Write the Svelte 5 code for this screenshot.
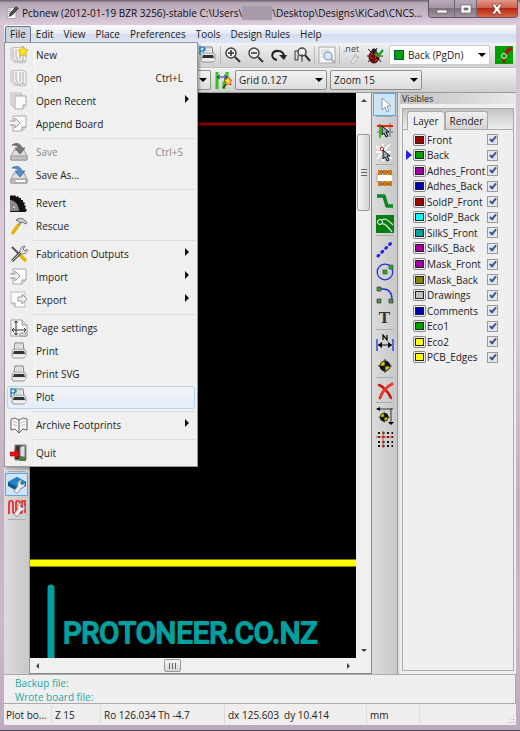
<script>
  const menus = ['File', 'Edit', 'View', 'Place', 'Preferences', 'Tools', 'Design Rules', 'Help'];

  const fileMenu = [
    { label: 'New', icon: 'new' },
    { label: 'Open', icon: 'open', key: 'Ctrl+L' },
    { label: 'Open Recent', icon: 'recent', sub: true },
    { label: 'Append Board', icon: 'import' },
    null,
    { label: 'Save', icon: 'save', key: 'Ctrl+S', disabled: true },
    { label: 'Save As...', icon: 'saveAs' },
    null,
    { label: 'Revert', icon: 'saw' },
    { label: 'Rescue', icon: 'hammer' },
    null,
    { label: 'Fabrication Outputs', icon: 'tools', sub: true },
    { label: 'Import', icon: 'import', sub: true },
    { label: 'Export', icon: 'export', sub: true },
    null,
    { label: 'Page settings', icon: 'page' },
    { label: 'Print', icon: 'print' },
    { label: 'Print SVG', icon: 'print' },
    { label: 'Plot', icon: 'plot', active: true },
    null,
    { label: 'Archive Footprints', icon: 'book', sub: true },
    null,
    { label: 'Quit', icon: 'quit' },
  ];

  const layers = [
    ['Front', '#a00000'],
    ['Back', '#00a000'],
    ['Adhes_Front', '#a000a0'],
    ['Adhes_Back', '#0000b8'],
    ['SoldP_Front', '#a00000'],
    ['SoldP_Back', '#00ffff'],
    ['SilkS_Front', '#00a0a0'],
    ['SilkS_Back', '#a000a0'],
    ['Mask_Front', '#a000a0'],
    ['Mask_Back', '#848400'],
    ['Drawings', '#c0c0c0'],
    ['Comments', '#0000b8'],
    ['Eco1', '#00a000'],
    ['Eco2', '#ffff00'],
    ['PCB_Edges', '#ffff00'],
  ];

  const rightTools = [
    'cursor', null, 'ratsnest', 'highlight', null, 'module', 'track', 'zone', null,
    'line', 'circle', 'arc', 'text', null, 'dimension', 'target', null, 'delete', null,
    'offset', 'grid',
  ];

  const sheet = '<path d="M3 1h13v11l-4 4H3z" fill="#fbfbfb" stroke="#aaa"/><path d="M12 16v-4h4" fill="#ddd" stroke="#999"/>';
  const board = '<path d="M1 2l11-1 4 2v13l-3 1-9-1-3-3z" fill="#f4f4f4" stroke="#bbb"/><path d="M3 3v9l3 3M6 3v8l2 3M10 3v10M13 3v12M5 15h10" fill="none" stroke="#aaa"/>';
  const printer = '<path d="M5 1h8l1 7H4z" fill="#fff" stroke="#777"/><path d="M2 9l2-2h10l2 2v5l-2 2H3l-1-2z" fill="#e2e2e2" stroke="#999"/><path d="M4 9h10l1 3H3z" fill="#333"/><path d="M3 14h13" stroke="#fff"/><path d="M6 3h6M6 5h6" stroke="#bbb"/>';
  const drive = '<path d="M4 7h10l3 6v4H1v-4z" fill="#ddd" stroke="#999"/><path d="M1 13h16v4H1z" fill="#c4c4c4" stroke="#999"/>';
  const glass = '<circle cx="7" cy="7" r="5" fill="#eee" stroke="#444" stroke-width="1.500"/><path d="M11 11l5 5" stroke="#333" stroke-width="2"/>';
  const wrench = '<path d="M8 17l-2-2 4-5c-1-4 1-6 4-6l-2 3 2 2 3-2c0 4-2 5-4 5l-3 5z" fill="#eee" stroke="#888" stroke-width=".8"/>';
  const target = '<circle cx="9" cy="9" r="5" fill="#d8c800" stroke="#111"/><path d="M9 9V4a5 5 0 0 1 5 5zM9 9v5a5 5 0 0 1-5-5z" fill="#111"/><path d="M9 2v14M2 9h14" stroke="#111" stroke-width=".8"/>';

  const icons = {
    app: '<path d="M3 2h11v14H3z" fill="#fff" stroke="#999"/><path d="M4 4h4M4 7h4M4 10h3M4 13h3" stroke="#777"/><path d="M6 13l1-4 7-8 3 2-7 8z" fill="#555" stroke="#222"/>',
    new: board + '<path d="M13 0l1.500 3.500 3.500.5-2.500 2.500.5 4-3-2-3.500 2 1-4L8 4l3.500-.5z" fill="#ffe818" stroke="#c9a800" stroke-width=".7"/>',
    open: board,
    recent: '<path d="M1 1h10v12H1z" fill="#eee" stroke="#bbb"/><path d="M3 3h10v12H3z" fill="#f4f4f4" stroke="#bbb"/><path d="M5 4h11v9l-3 4H5z" fill="#fbfbfb" stroke="#aaa"/><path d="M13 17v-4h3" fill="#ddd" stroke="#aaa"/>',
    import: sheet + '<path d="M0 6h5V3l5 5-5 5v-3H0" fill="#f0f0f0" stroke="#999"/>',
    export: '<path d="M1 1h14v15H5l-4-4z" fill="#fbfbfb" stroke="#bbb"/><path d="M1 12h4v4" fill="#ddd" stroke="#aaa"/><path d="M8 6h4V3l5 5-5 5v-3H8z" fill="#f0f0f0" stroke="#999"/>',
    save: drive + '<path d="M2 2c5-3 9-1 10 3h3l-5 6-5-6h3c0-2-2-3-6-3z" fill="#777" stroke="#555" stroke-width=".7"/>',
    saveAs: drive + '<path d="M2 2c5-3 9-1 10 3h3l-5 6-5-6h3c0-2-2-3-6-3z" fill="#5b8fc4" stroke="#31619a" stroke-width=".7"/><path d="M6 14h9v2H6z" fill="#fff"/>',
    saw: '<path d="M0 2l2-1 1 1 2-1 1 2 2-1 1 2 2 0 0 2 2 0 0 2 2 1-1 2 2 1-1 2 2 2-2 3H0z" fill="#111"/><path d="M0 6c5 0 9 5 9 11H0z" fill="#888"/><circle cx="4" cy="13" r="1" fill="#ddd"/>',
    hammer: '<path d="M2 17L9 7" stroke="#e6b400" stroke-width="3.500"/><path d="M9 8l3-4" stroke="#999" stroke-width="2"/><path d="M6 3c4-3 8-2 11 3l-2 1c-2-2-3-2-5-1L8 4z" fill="#ccc" stroke="#555" stroke-width=".8"/>',
    tools: '<path d="M2 2l9 9" stroke="#555" stroke-width="2"/><path d="M10 10l6 6" stroke="#e6b400" stroke-width="3.500"/><path d="M2 16l9-9" stroke="#444" stroke-width="3"/><path d="M2 16l9-9" stroke="#ddd"/><path d="M10 7c0-4 2-6 5-6l-2 3 2 2 2-2c1 3-2 5-5 5" fill="#ddd" stroke="#777"/>',
    page: '<path d="M1 1h11l5 5v11H1z" fill="#fff" stroke="#999"/><path d="M12 1v5h5M10 14h7v3h-7z" fill="#ddd" stroke="#999"/><path d="M6 2v14M2 11h14M4 4l2-2 2 2M4 14l2 2 2-2M4 9l-2 2 2 2M14 9l2 2-2 2" fill="none" stroke="#333"/>',
    print: printer,
    plot: printer + '<path d="M1 9V1h2c4 0 4 4 0 4H1" fill="none" stroke="#2489c8" stroke-width="1.500"/>',
    book: '<path d="M9 4L5 2 1 3v11l4-1 4 4 4-4 4 1V3l-4-1z" fill="#f6f6f6" stroke="#666"/><path d="M9 4v13" stroke="#555"/><path d="M3 5l4 2M3 8l4 2M15 5l-4 2M15 8l-4 2" stroke="#bbb"/>',
    quit: '<path d="M5 1h11v15H5z" fill="#343434" stroke="#888"/><path d="M10 3l5-2v12l-5 4z" fill="#ddd" stroke="#777"/><path d="M10 12l6 1v4h-6z" fill="#55793e"/><path d="M0 8h5V5l5 5-5 5v-3H0z" fill="#e81010" stroke="#b00" stroke-width=".6"/>',
    zoomIn: glass + '<path d="M4 7h6M7 4v6" stroke="#333" stroke-width="1.500"/>',
    zoomOut: glass + '<path d="M4 7h6" stroke="#333" stroke-width="1.500"/>',
    redraw: '<path d="M7 14c-8-2-5-10 2-9 3 0 4 2 5 4" fill="none" stroke="#222" stroke-width="2"/><path d="M9 9h8l-3 5z" fill="#222"/>',
    zoomFit: '<circle cx="9" cy="6" r="4" fill="#eee" stroke="#444" stroke-width="1.500"/><path d="M12 9l5 6" stroke="#333" stroke-width="2"/><path d="M5 5H2v9h3V9M9 8v8" fill="none" stroke="#333"/>',
    find: '<path d="M1 1h16v16H1z" fill="#f8f8f8" stroke="#aaa"/><path d="M3 4h9M3 6h7M3 8h5M3 11h3" stroke="#ccc"/><circle cx="10" cy="10" r="4" fill="#dce9f5" stroke="#8eafd0" stroke-width="1.500"/><path d="M13 13l4 4" stroke="#aaa" stroke-width="2"/>',
    bug: '<path d="M2 3l4 4M11 2L9 6M1 10h4M2 16l4-4M14 10h3M15 16l-3-4" stroke="#222"/><ellipse cx="8" cy="11" rx="5" ry="6" fill="#b51c10" stroke="#300"/><circle cx="8" cy="5" r="2.500" fill="#222"/><path d="M8 6v11" stroke="#300"/><circle cx="6" cy="10" r="1"/><circle cx="11" cy="12" r="1"/><circle cx="6" cy="14" r="1"/><path d="M9 7l3 3 5-6" fill="none" stroke="#1ca51c" stroke-width="2.500"/>',
    router: '<path d="M0 0h18v18H0z" fill="#00a000"/><path d="M17 2l-4 2-3 5" fill="none" stroke="#b01010" stroke-width="3.500"/><path d="M9 9v8" stroke="#b01010" stroke-width="3"/><circle cx="9" cy="10" r="2.500" fill="#00a000" stroke="#eee"/>',
    autoTrack: '<path d="M3 1v17M13 1v7l-3 4v6" fill="none" stroke="#32c41c" stroke-width="3"/><path d="M3 6h10M6 4L3 6l3 2M10 4l3 2-3 2" fill="none" stroke="#173579"/><path d="M9 17l5-6" stroke="#333" stroke-width="1.500"/><path d="M15 6l1 3h2l-2 2 1 3-3-1-2 1v-3l-2-2 3-1z" fill="#ffd840" stroke="#d83a18" stroke-width=".8"/>',
    cursor: '<path d="M6 2v12l3-3 2 5 2-1-2-5h4z" fill="#fff" stroke="#8d9aab"/>',
    ratsnest: '<path d="M14 2v14M1 11h16" stroke="#999" stroke-width="2"/><path d="M4 3v14" stroke="#34bf17" stroke-width="2"/><path d="M1 5h16" stroke="#f02010" stroke-width="2"/><path d="M6 5v9l2-2 2 4 2-1-2-4h3z" fill="#9ab" stroke="#111"/>',
    highlight: '<path d="M0 2l16 13M1 15L14 0M7 0v17M0 8h15" stroke="#fff" stroke-width="1.500"/><circle cx="6" cy="5" r="1.700" fill="#fff" stroke="#e02020"/><path d="M7 6v9l2-2 2 4 2-1-2-4h3z" fill="#9ab" stroke="#112"/>',
    module: '<path d="M1 5h16v8H1z" fill="#fff" stroke="#aaa"/><path d="M2 3h14M2 15h14" stroke="#733c0c" stroke-width="2"/><path d="M4 1v5M9 1v5M14 1v5M4 12v5M9 12v5M14 12v5" stroke="#c87820" stroke-width="4"/>',
    track: '<path d="M1 4h7l3 10h6" fill="none" stroke="#078820" stroke-width="3.500" stroke-linejoin="round"/>',
    zone: '<path d="M0 0h18v18H0z" fill="#087d13"/><circle cx="4" cy="7" r="2.500" fill="none" stroke="#fff"/><path d="M6 5c3-2 5-1 11 5M6 9c3-1 5 2 10 8" fill="none" stroke="#d6e9d6" stroke-width="1.300"/>',
    line: '<path d="M2 16L16 2" stroke="#1524e5" stroke-width="3" stroke-linecap="round" stroke-dasharray="1 4.500"/>',
    circle: '<circle cx="9" cy="9" r="7.800" fill="none" stroke="#2635df" stroke-width="1.300"/><path d="M7 7h4v4H7zM13 2h4v4h-4z" fill="#3a9d3a" stroke="#175c17" stroke-width=".6"/>',
    arc: '<path d="M3 3h4c6 0 9 4 9 11" fill="none" stroke="#2635df" stroke-width="1.500"/><path d="M1 1h4v4H1zM1 13h4v4H1zM13 13h4v4h-4z" fill="#3a9d3a" stroke="#444" stroke-width=".8"/>',
    dimension: '<path d="M1 5v12M17 5v12" stroke="#1c35d5" stroke-width="1.300"/><path d="M2 11h14" stroke="#111"/><path d="M2 11l4-3v6zM16 11l-4-3v6z"/><path d="M7 6V1l4 5V1" fill="none" stroke="#111" stroke-width="1.300"/>',
    target,
    delete: '<path d="M3 3c3 1 9 6 12 13" fill="none" stroke="#c81a10" stroke-width="2.500" stroke-linecap="round"/><path d="M16 2C10 5 6 10 4 16" fill="none" stroke="#e23a2c" stroke-width="3" stroke-linecap="round"/>',
    offset: '<g transform="translate(1 3) scale(.8)">' + target + '</g><path d="M1 2h16M15 1v15" stroke="#333"/><path d="M0 2l4-2v4zM15 18l-3-3h6z"/>',
    grid: '<path d="M2 3h15M2 7h15M2 12h15M2 16h15" stroke="#111" stroke-width="2" stroke-dasharray="2 2.500"/><path d="M7 1v17M0 7h18" stroke="#e03a2a"/>',
    blueBoard: '<path d="M0 6l9-5 9 5v4l-9 5-9-5z" fill="#145989"/><path d="M0 6l9-5 9 5-9 5z" fill="#1d86c4"/>' + wrench,
    redTrack: '<path d="M1 15V4c0-3 4-3 4 0v8c0 3 3 3 3 0V4c0-3 4-3 4 0v8c0 3 2 3 2 0V2h3v12" fill="none" stroke="#e22" stroke-width="1.700"/>' + wrench,
    net: wrench,
  };
</script>

{#snippet icon(name)}
  <svg class="icon" viewBox="0 0 18 18" aria-hidden="true">{@html icons[name]}</svg>
{/snippet}

<div class="window">
  <header class="titlebar">
    {@render icon('app')}
    <h1>Pcbnew (2012-01-19 BZR 3256)-stable C:\Users\<span class="redacted"></span>\Desktop\Designs\KiCad\CNCS...</h1>
    <div class="controls">
      <button aria-label="Minimize"><svg viewBox="0 0 14 12"><path d="M2 7h10v3H2z" fill="#fff" stroke="#666" stroke-width=".7" /></svg></button>
      <button class="max" aria-label="Maximize"><svg viewBox="0 0 14 12"><path d="M2 2h10v8H2zM5 5v2h4V5z" fill="#fff" fill-rule="evenodd" stroke="#666" stroke-width=".7" /></svg></button>
      <button class="close" aria-label="Close"><svg viewBox="0 0 14 12"><path d="M2 1h3l2 3 2-3h3L9 6l3 5H9L7 8l-2 3H2l3-5z" fill="#fff" stroke="#644" stroke-width=".7" /></svg></button>
    </div>
  </header>

  <div class="frame">
    <nav class="menubar">
      {#each menus as menu, i}
        <button class:open={i === 0}>{menu}</button>
      {/each}

      <div class="dropdown" role="menu">
        {#each fileMenu as item}
          {#if item}
            <button class="item" class:active={item.active} role="menuitem" disabled={item.disabled}>
              {@render icon(item.icon)}
              <span>{item.label}</span>
              {#if item.key}<kbd>{item.key}</kbd>{/if}
              {#if item.sub}<i class="arrow"></i>{/if}
            </button>
          {:else}
            <hr />
          {/if}
        {/each}
      </div>
    </nav>

    <div class="toolbar main">
      <button aria-label="Plot">{@render icon('plot')}</button>
      <i class="sep"></i>
      <button aria-label="Zoom in">{@render icon('zoomIn')}</button>
      <button aria-label="Zoom out">{@render icon('zoomOut')}</button>
      <button aria-label="Redraw">{@render icon('redraw')}</button>
      <button aria-label="Zoom to fit">{@render icon('zoomFit')}</button>
      <i class="sep"></i>
      <button aria-label="Find">{@render icon('find')}</button>
      <i class="sep"></i>
      <button class="net" aria-label="Netlist"><small>.net</small>{@render icon('net')}</button>
      <button aria-label="Design rules check">{@render icon('bug')}</button>
      <label class="combo layer">
        <i class="chip"></i>
        <select aria-label="Active layer"><option>Back (PgDn)</option></select>
      </label>
      <button aria-label="Router mode">{@render icon('router')}</button>
    </div>

    <div class="toolbar aux">
      <label class="combo track"><select aria-label="Track width"><option></option></select></label>
      <button aria-label="Auto track width">{@render icon('autoTrack')}</button>
      <label class="combo"><select aria-label="Grid"><option>Grid 0.127</option></select></label>
      <label class="combo"><select aria-label="Zoom"><option>Zoom 15</option></select></label>
    </div>

    <main>
      <div class="side left">
        <hr />
        <button class="on" aria-label="Layers manager">{@render icon('blueBoard')}</button>
        <button aria-label="Microwave tools">{@render icon('redTrack')}</button>
        <hr />
      </div>

      <div class="view">
        <svg class="canvas">
          <line x1="0" y1="31" x2="100%" y2="31" stroke="#840000" stroke-width="3" />
          <line x1="0" y1="470" x2="100%" y2="470" stroke="#ff0" stroke-width="7" />
          <line x1="21" y1="495" x2="21" y2="600" stroke="#00a0a0" stroke-width="7" stroke-linecap="round" />
          <text x="33" y="550">PROTONEER.CO.NZ</text>
        </svg>
        <div class="scroll vertical"><i class="up"></i><b></b><i class="down"></i></div>
        <div class="scroll horizontal"><i class="back"></i><b></b><i class="next"></i></div>
      </div>

      <div class="side right">
        {#each rightTools as tool}
          {#if tool === 'text'}
            <button class="letter">T</button>
          {:else if tool}
            <button class:on={tool === 'cursor'} aria-label={tool}>{@render icon(tool)}</button>
          {:else}
            <hr />
          {/if}
        {/each}
      </div>

      <aside>
        <h2>Visibles</h2>
        <div class="panel">
          <div class="tabs">
            <button class="current">Layer</button>
            <button>Render</button>
          </div>
          <ul>
            {#each layers as [name, color], i}
              <li>
                <i class="mark" class:shown={i === 1}></i>
                <button class="swatch" aria-label="{name} colour"><span style="background: {color}"></span></button>
                <label for="layer-{i}">{name}</label>
                <input id="layer-{i}" type="checkbox" checked />
              </li>
            {/each}
          </ul>
        </div>
      </aside>
    </main>

    <div class="messages">
      <p>Backup file:</p>
      <p>Wrote board file:</p>
    </div>

    <footer>
      <span class="msg">Plot bo...</span>
      <span class="zoom">Z 15</span>
      <span class="polar">Ro 126.034 Th -4.7</span>
      <span class="delta">dx 125.603&nbsp; dy 10.414</span>
      <span class="unit">mm</span>
      <span class="grip"></span>
    </footer>
  </div>
</div>

<style>
  :global(body) {
    margin: 0;
  }

  .window {
    display: flex;
    flex-direction: column;
    box-sizing: border-box;
    min-height: 100vh;
    padding: 0 4px 5px;

    font-family: 'Open Sans', 'Noto Sans', sans-serif;
    font-size: 10px;
    line-height: 14px;
    color: #222;

    background: linear-gradient(#a99aa9, #d5c3d4 26px, #dccbdd 300px, #c3afc4 500px, #cdb8cd 620px, #bda9bf);
    border-bottom: 1px solid #554a55;
  }

  button,
  select,
  kbd {
    padding: 0;
    font: inherit;
    color: inherit;
    background: none;
    border: 0;
  }

  h1,
  h2,
  p,
  ul,
  hr {
    margin: 0;
    padding: 0;
    border: 0;
  }

  .icon {
    display: block;
    flex: none;
    width: 18px;
    height: 18px;
  }

  .titlebar {
    display: flex;
    align-items: center;
    height: 25px;
    margin: 0 -4px;
    padding-left: 5px;
    background: linear-gradient(#6d606d, #b6a7b6 3px, #cbbacb 16px, #dccddd);
  }

  .titlebar .icon {
    width: 14px;
    height: 14px;
  }

  h1 {
    flex: 1;
    padding-left: 3px;
    font-size: 10px;
    font-weight: 400;
    white-space: nowrap;
    color: #111;
  }

  .redacted {
    display: inline-block;
    width: 30px;
    height: 14px;
    vertical-align: top;
    background: #a89ba8;
  }

  .controls {
    display: flex;
    align-self: flex-start;
    height: 17px;
    margin-right: 2px;
    border: 1px solid #625662;
    border-top: 0;
    border-radius: 0 0 4px 4px;
    overflow: hidden;
  }

  .controls button {
    display: grid;
    place-items: center;
    width: 26px;
    border-right: 1px solid #746674;
    background: linear-gradient(#b9aab9, #a293a2 50%, #7f707f 50%, #a494a4);
  }

  .controls .max {
    width: 22px;
  }

  .controls .close {
    width: 40px;
    border: 0;
    background: linear-gradient(#e19787, #cf5b47 50%, #b8280f 50%, #d6644a);
  }

  .controls svg {
    width: 14px;
    height: 12px;
  }

  .frame {
    display: flex;
    flex: 1;
    flex-direction: column;
    background: #efefef;
  }

  .menubar {
    position: relative;
    display: flex;
    height: 17px;
    padding: 1px 1px 0;
    background: linear-gradient(#fdfdff, #e3e9f5 50%, #d3dbee 50%, #dfe6f6);
  }

  .menubar > button {
    padding: 0 5px;
    line-height: 15px;
    border-radius: 2px;
  }

  .menubar > button.open {
    background: #ccd3e0;
    box-shadow: inset 0 0 0 1px #6b7687;
  }

  .dropdown {
    position: absolute;
    top: 17px;
    left: 0;
    z-index: 1;
    box-sizing: border-box;
    width: 194px;
    padding: 1px 2px;
    background: linear-gradient(90deg, #efefef 28px, #ddd 28px, #fff 29px, #f0f0f0 30px);
    border: 1px solid #979797;
    box-shadow: 2px 2px 2px #0004;
  }

  .item {
    display: flex;
    align-items: center;
    width: 100%;
    height: 23px;
    padding: 0 5px 1px 2px;
    border: 1px solid transparent;
    border-radius: 3px;
    text-align: left;
  }

  .item span {
    flex: 1;
    padding-left: 8px;
  }

  .item kbd {
    padding-right: 6px;
  }

  .item:disabled {
    color: #8a8a8a;
  }

  .item.active {
    background: linear-gradient(#f0f3f8, #e5edf8);
    border-color: #b5d3f3;
  }

  .dropdown hr {
    height: 1px;
    margin: 2px 0 2px 26px;
    background: #dcdcdc;
  }

  .arrow {
    margin-bottom: 4px;
    border: 4px solid transparent;
    border-right: 0;
    border-left-color: #111;
  }

  .toolbar {
    display: flex;
    align-items: center;
    box-sizing: border-box;
    height: 25px;
    background: linear-gradient(#f2f2f2, #cfcfcf);
    border-bottom: 1px solid #c2c2c2;
  }

  .main {
    gap: 5px;
    padding-left: 195px;
  }

  .aux {
    gap: 3px;
    padding-left: 2px;
    border-bottom-color: #999;
  }

  .sep {
    flex: none;
    width: 1px;
    height: 18px;
    margin: 0 -2px;
    background: #bbb;
  }

  .net {
    position: relative;
  }

  .net .icon {
    padding: 6px 2px 0 4px;
    box-sizing: border-box;
  }

  .net small {
    position: absolute;
    top: -4px;
    left: 0;
    font-size: 9px;
    line-height: 14px;
    color: #444;
  }

  .combo {
    position: relative;
    flex: none;
    width: 92px;
    color: #222;
  }

  .combo::after {
    position: absolute;
    top: 8px;
    right: 4px;
    border: 4px solid transparent;
    border-top-color: #000;
    border-bottom: 0;
    content: '';
  }

  .combo select {
    width: 100%;
    height: 20px;
    padding: 0 3px;
    appearance: none;
    border: 1px solid #8e8e8e;
    border-radius: 2px;
    background: linear-gradient(#f2f2f2, #ddd);
  }

  .combo.track {
    width: 205px;
  }

  .combo.layer {
    width: 101px;
  }

  .layer select {
    padding-left: 18px;
    background: #fff;
    border-color: #ccc;
  }

  .chip {
    position: absolute;
    top: 5px;
    left: 5px;
    width: 8px;
    height: 8px;
    background: #00a000;
    border: 1px solid #055;
  }

  main {
    display: flex;
    flex: 1;
    background: #e0e0e0;
  }

  .side {
    box-sizing: border-box;
    width: 26px;
    padding: 0 1px;
    background: linear-gradient(90deg, #dcdcdc, #c8c8c8);
    border-right: 1px solid #999;
  }

  .side button {
    display: grid;
    place-items: center;
    width: 100%;
    height: 23px;
  }

  .side button.on {
    background: #cde4f9;
    box-shadow: inset 0 0 0 1px #5ba7ec;
  }

  .side .letter {
    font: 700 17px 'Liberation Serif', serif;
    color: #333;
  }

  .side hr {
    height: 1px;
    margin: 0 3px 1px;
    background: #aaa;
  }

  .left {
    padding-top: 378px;
  }

  .view {
    display: grid;
    flex: 1;
    grid-template: 1fr 15px / 1fr 15px;
    background: #f0f0f0;
    border-right: 1px solid #888;
    border-bottom: 1px solid #888;
  }

  .canvas {
    width: 100%;
    height: 100%;
    background: #000;
  }

  .canvas text {
    font: 400 29px Roboto, sans-serif;
    fill: #00a0a0;
    stroke: #00a0a0;
    stroke-width: 2px;
    stroke-linejoin: round;
  }

  .scroll {
    display: flex;
    align-items: center;
    background: #f0f0f0;
  }

  .scroll b {
    box-sizing: border-box;
    border: 1px solid #999;
    border-radius: 2px;
  }

  .scroll i {
    border: 3px solid transparent;
  }

  .vertical {
    flex-direction: column;
    padding: 3px 0;
  }

  .vertical b {
    width: 13px;
    height: 77px;
    margin: 32px 0 auto;
    background:
      repeating-linear-gradient(#666 0 1px, transparent 1px 3px) center / 6px 7px no-repeat,
      linear-gradient(90deg, #f5f5f5, #d4d4d4);
  }

  .horizontal {
    padding: 0 3px;
  }

  .horizontal b {
    width: 17px;
    height: 13px;
    margin: 0 auto 0 125px;
    background:
      repeating-linear-gradient(90deg, #666 0 1px, transparent 1px 3px) center / 7px 6px no-repeat,
      linear-gradient(#f5f5f5, #d4d4d4);
  }

  .scroll .up {
    border-bottom-color: #444;
  }

  .scroll .down {
    border-top-color: #444;
  }

  .scroll .back {
    border-right-color: #444;
  }

  .scroll .next {
    border-left-color: #444;
  }

  aside {
    display: flex;
    flex-direction: column;
    width: 116px;
    margin-left: 2px;
    background: #efefef;
  }

  h2 {
    padding-left: 2px;
    font-size: 9px;
    font-weight: 400;
    line-height: 11px;
    background: linear-gradient(90deg, #c2c2c2, #e8e8e8);
  }

  .panel {
    flex: 1;
    margin: 4px 2px 3px;
    border: 1px solid #aaa;
  }

  .tabs {
    display: flex;
    align-items: flex-end;
    height: 20px;
    padding-left: 4px;
    background: linear-gradient(#c4c4c4, #eee);
    border-bottom: 1px solid #aaa;
  }

  .tabs button {
    height: 18px;
    padding: 0 4px;
    background: linear-gradient(#eee, #d5d5d5);
    border: 1px solid #aaa;
    border-bottom: 0;
    border-radius: 3px 3px 0 0;
  }

  .tabs .current {
    height: 19px;
    padding: 0 5px;
    margin-bottom: -1px;
    background: #efefef;
  }

  ul {
    display: grid;
    grid-auto-rows: 1fr;
    height: 233px;
    padding: 2px 15px 0 3px;
    list-style: none;
  }

  li {
    display: flex;
    align-items: center;
    white-space: nowrap;
  }

  .mark {
    border: 5px solid transparent;
    border-right: 0;
    border-left-width: 6px;
  }

  .mark.shown {
    border-left-color: #2222e8;
  }

  .swatch {
    display: grid;
    place-items: center;
    width: 13px;
    height: 12px;
    margin: 0 1px;
    background: #eee;
    border: 1px solid #888;
    border-radius: 2px;
  }

  .swatch span {
    width: 7px;
    height: 6px;
    border: 1px solid #222;
  }

  li label {
    flex: 1;
    width: 0;
  }

  input {
    width: 11px;
    height: 11px;
    margin: 0;
    appearance: none;
    background: #e4e8ee;
    border: 1px solid #999;
  }

  input:checked::before {
    display: block;
    width: 2px;
    height: 5px;
    margin: 0 auto;
    border: solid #3c5590;
    border-width: 0 2px 2px 0;
    transform: rotate(40deg);
    content: '';
  }

  .messages {
    box-sizing: border-box;
    height: 30px;
    padding: 1px 0 0 11px;
    color: #28a8a8;
    border: solid #aaa;
    border-width: 1px 1px 1px 0;
  }

  footer {
    display: flex;
    margin-top: 1px;
    line-height: 20px;
    background: #f0eded;
  }

  footer span {
    box-sizing: border-box;
    padding-left: 3px;
    border-right: 1px solid #ddd;
    white-space: nowrap;
  }

  .msg.msg {
    width: 48px;
    padding-left: 2px;
  }

  .zoom {
    width: 49px;
  }

  .polar {
    width: 124px;
  }

  .delta {
    width: 142px;
  }

  .unit {
    width: 53px;
  }

  footer .grip {
    width: 9px;
    height: 9px;
    margin: auto 1px 1px auto;
    border: 0;
    background: radial-gradient(#999 1px, transparent 1px) 0 0 / 3px 3px;
    clip-path: polygon(100% 0, 100% 100%, 0 100%);
  }
</style>
